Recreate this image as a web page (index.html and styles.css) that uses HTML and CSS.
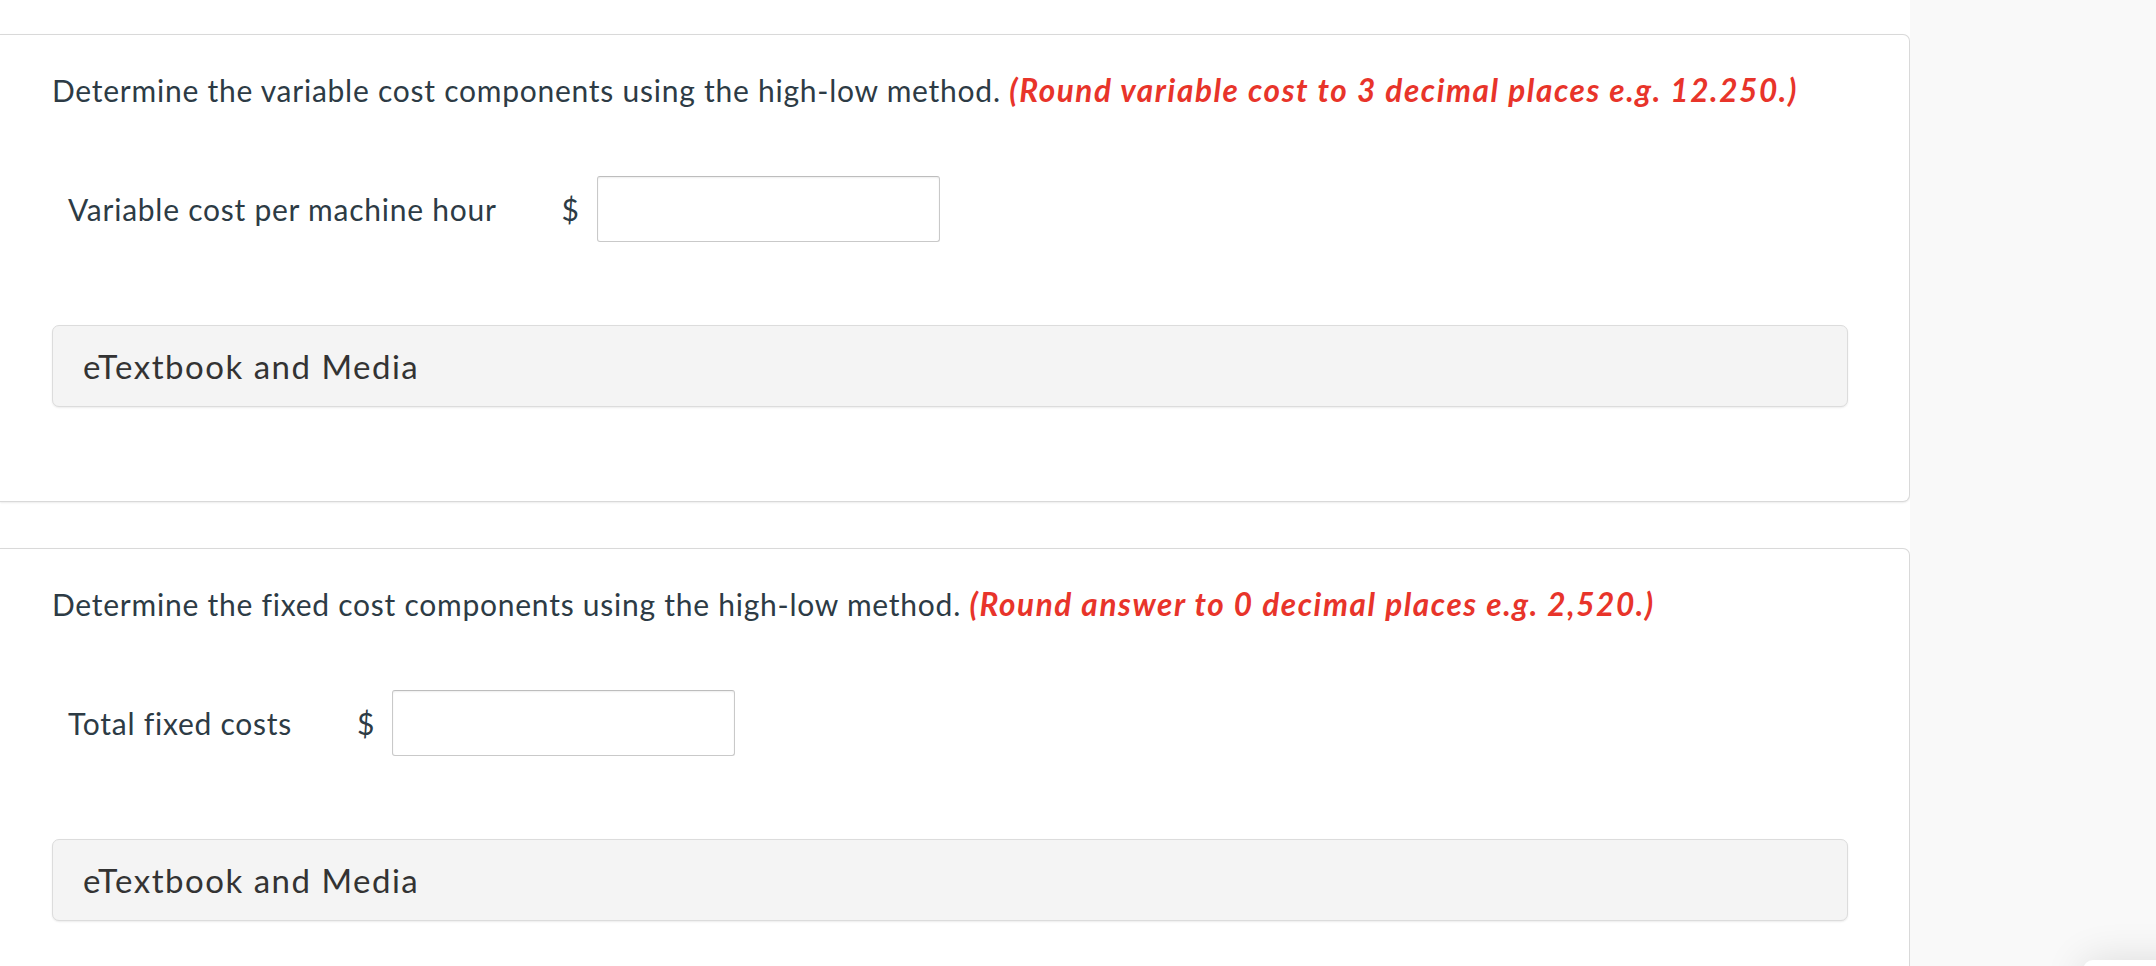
FILE: index.html
```html
<!DOCTYPE html>
<html lang="en">
<head>
<meta charset="utf-8">
<title>High-low method</title>
<link rel="stylesheet" href="styles.css">
</head>
<body>
<div class="layout">
  <main class="main">
    <section class="card">
      <p class="prompt">Determine the variable cost components using the high-low method. <span class="hint">(Round variable cost to 3 decimal places e.g. 12.250.)</span></p>
      <div class="answer-row">
        <span class="answer-label">Variable cost per machine hour</span>
        <span class="currency">$</span>
        <input class="answer-input" type="text" aria-label="Variable cost per machine hour">
      </div>
      <div class="media-bar">eTextbook and Media</div>
    </section>
    <section class="card">
      <p class="prompt">Determine the fixed cost components using the high-low method. <span class="hint">(Round answer to 0 decimal places e.g. 2,520.)</span></p>
      <div class="answer-row">
        <span class="answer-label">Total fixed costs</span>
        <span class="currency">$</span>
        <input class="answer-input" type="text" aria-label="Total fixed costs">
      </div>
      <div class="media-bar">eTextbook and Media</div>
    </section>
  </main>
  <aside class="sidebar"></aside>
</div>
<div class="floating-tab"></div>
</body>
</html>
```

FILE: styles.css
```css
html, body {
  margin: 0;
  padding: 0;
  height: 100%;
  overflow: hidden;
  background: #ffffff;
}

body {
  font-family: Lato, "Open Sans", "Liberation Sans", sans-serif;
  color: #2d3b45;
}

.layout {
  display: flex;
  min-height: 966px;
}

.main {
  flex: 0 0 1910px;
  padding-top: 34px;
  background: #ffffff;
}

.sidebar {
  flex: 1 1 auto;
  background: #f9f9f9;
}

.card {
  background: #ffffff;
  border: 1px solid #d9d9d9;
  border-left: 0;
  border-radius: 0 7px 7px 0;
  box-shadow: 0 1px 2px rgba(0, 0, 0, 0.08);
  padding: 37px 61px 94px 52px;
  margin-bottom: 46px;
}

.prompt {
  margin: 0;
  font-size: 30px;
  line-height: 36px;
  letter-spacing: 0.75px;
  color: #2d3b45;
  white-space: nowrap;
}

.hint {
  color: #e8342a;
  font-weight: 700;
  font-style: italic;
  font-size: 31.5px;
  letter-spacing: 1.6px;
}

.answer-row {
  display: flex;
  align-items: center;
  margin-top: 68px;
  padding-left: 16px;
}

.answer-label {
  font-size: 30px;
  line-height: 36px;
  letter-spacing: 0.75px;
  margin-right: 65px;
}

.currency {
  font-size: 30px;
  line-height: 36px;
  margin-right: 18px;
}

.answer-input {
  box-sizing: border-box;
  width: 343px;
  height: 66px;
  border: 1px solid #c9c9c9;
  border-top-color: #bdbdbd;
  border-radius: 3px;
  box-shadow: inset 0 1px 2px rgba(0, 0, 0, 0.07);
  background: #ffffff;
  margin: 0;
  padding: 0 12px;
  font-family: inherit;
  font-size: 28px;
}

.media-bar {
  margin-top: 83px;
  background: #f4f4f4;
  border: 1px solid #dcdcdc;
  border-radius: 7px;
  box-shadow: 0 1px 2px rgba(0, 0, 0, 0.08);
  padding: 22px 30px;
  font-size: 33px;
  line-height: 36px;
  letter-spacing: 1.5px;
  color: #333333;
}

.floating-tab {
  position: absolute;
  left: 2083px;
  top: 960px;
  width: 120px;
  height: 60px;
  background: #ffffff;
  border-radius: 10px;
  box-shadow: 0 0 40px rgba(0, 0, 0, 0.12);
}
```
